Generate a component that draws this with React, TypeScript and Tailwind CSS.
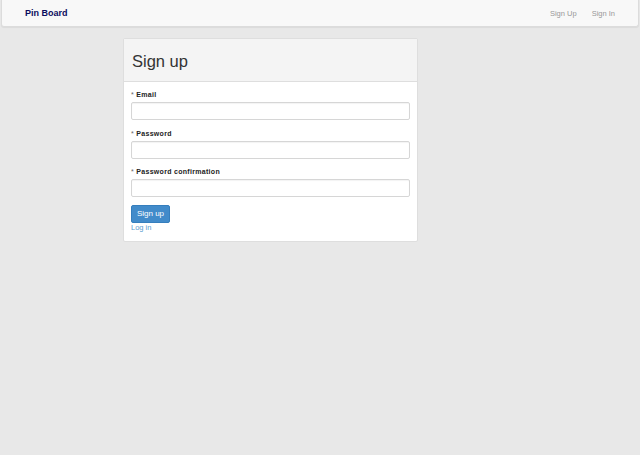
export default function App() {
  const fields = ["Email", "Password", "Password confirmation"];
  return (
    <div className="min-h-[455px] bg-[#e8e8e8] font-['Liberation_Sans',Arial,sans-serif]">
      {/* Navbar */}
      <div className="mx-[1px] flex h-[27px] items-center justify-between rounded-b-[3px] border border-t-0 border-[#dcdcdc] bg-[#f8f8f8] shadow-[0_1px_1px_rgba(0,0,0,0.06)]">
        <span className="pl-[23px] pt-[1px] text-[9px] font-bold text-[#0b0b5e]">Pin Board</span>
        <div className="flex gap-[15px] pr-[23px] pt-[1px] text-[7.5px] text-[#999]">
          <span>Sign Up</span>
          <span>Sign In</span>
        </div>
      </div>

      {/* Panel */}
      <div className="ml-[123px] mt-[11px] w-[295px] overflow-hidden rounded-[2px] border border-[#dedede] bg-white">
        <div className="flex h-[43px] items-center border-b border-[#dedede] bg-[#f4f4f4] pl-[8px] pt-[3px]">
          <h1 className="text-[16.5px] text-[#333]">Sign up</h1>
        </div>
        <div className="px-[7px] pb-[8px] pt-[7px]">
          {fields.map((f) => (
            <div key={f} className="mb-[7.5px]">
              <label className="mb-[3px] block h-[10px] text-[7px] font-bold leading-[12px] tracking-[0.3px] text-[#222]">
                <span className="font-normal text-[#666]">* </span>
                {f}
              </label>
              <div className="h-[18px] w-full rounded-[2px] border border-[#d6d6d6] bg-white shadow-[inset_0_1px_1px_rgba(0,0,0,0.05)]" />
            </div>
          ))}
          <button className="block h-[18px] w-[39px] rounded-[2px] border border-[#357ebd] bg-[#428bca] text-[8px] text-white">
            Sign up
          </button>
          <a className="block text-[7.5px] leading-[10px] text-[#5b9ccf]">Log in</a>
        </div>
      </div>
    </div>
  );
}
